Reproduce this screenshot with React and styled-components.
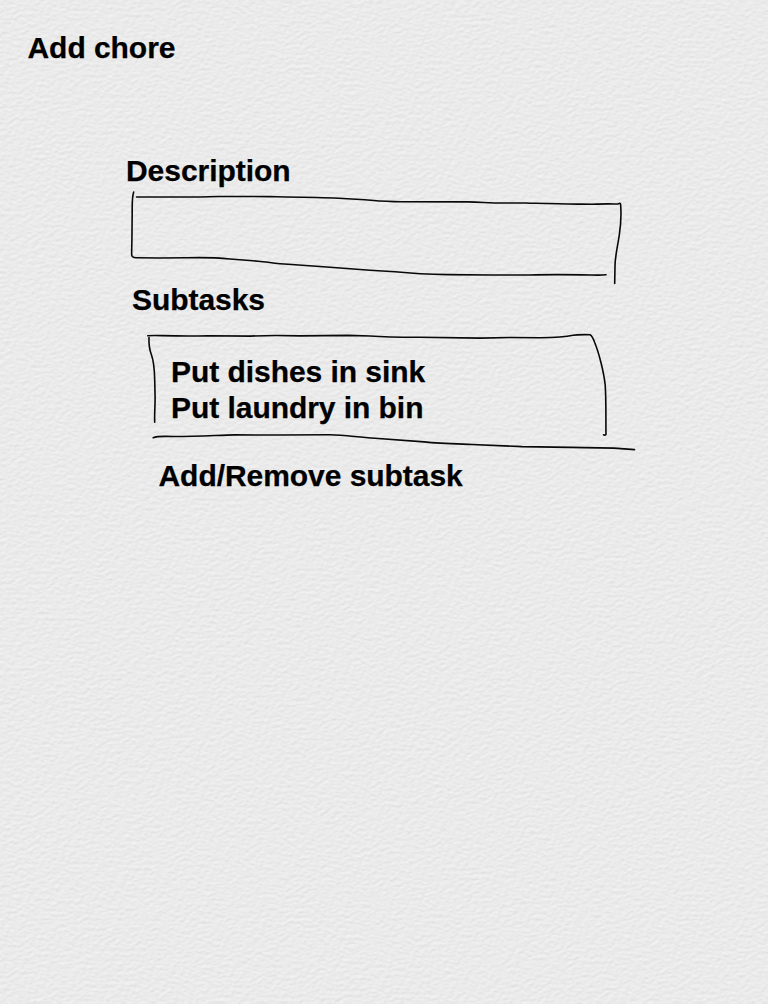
import React from "react";
import styled, { createGlobalStyle, css } from "styled-components";

const GlobalStyle = createGlobalStyle`
  body {
    margin: 0;
    background: #eaeaea;
  }
`;

const heavyText = css`
  font-size: 30px;
  line-height: 36px;
  font-weight: 700;
  letter-spacing: -0.05px;
  white-space: nowrap;
`;

const Page = styled.main`
  position: relative;
  isolation: isolate;
  box-sizing: border-box;
  width: 768px;
  height: 1004px;
  padding-top: 30px;
  overflow: hidden;
  display: flex;
  flex-direction: column;
  background: #eaeaea;
  color: #000;
  font-family: "Liberation Sans", Helvetica, Arial, sans-serif;
  -webkit-text-stroke: 0.25px #000;
`;

const Paper = styled.svg`
  position: absolute;
  inset: 0;
  z-index: -1;
  width: 100%;
  height: 100%;
`;

const Title = styled.h1`
  ${heavyText}
  margin: 0 0 87px 27.5px;
`;

const Form = styled.section`
  display: flex;
  flex-direction: column;
  align-items: flex-start;
`;

const Label = styled.h2`
  ${heavyText}
  margin: 0 0 0 ${(p) => p.$indent}px;
`;

const Field = styled.div`
  display: grid;
  width: 768px;
  height: ${(p) => p.$height}px;
  > * {
    grid-area: 1 / 1;
  }
`;

const Sketch = styled.svg`
  width: 768px;
  height: 100%;
  overflow: visible;
  fill: none;
  stroke: #080808;
  stroke-width: 1.6;
  stroke-linecap: round;
  stroke-linejoin: round;
`;

const TaskList = styled.ul`
  margin: 0;
  padding: 36px 0 0 171px;
  list-style: none;
`;

const Task = styled.li`
  ${heavyText}
`;

function PaperTexture() {
  return (
    <Paper aria-hidden="true">
      <filter id="grain" x="0" y="0" width="100%" height="100%" colorInterpolationFilters="sRGB">
        <feTurbulence type="fractalNoise" baseFrequency="0.2 0.3" numOctaves="3" seed="8" result="noise" />
        <feDiffuseLighting in="noise" surfaceScale="0.24" diffuseConstant="1.062" lightingColor="#ebebeb">
          <feDistantLight azimuth="250" elevation="70" />
        </feDiffuseLighting>
      </filter>
      <rect width="100%" height="100%" filter="url(#grain)" />
    </Paper>
  );
}

export default function App() {
  return (
    <>
      <GlobalStyle />
      <Page>
        <PaperTexture />
        <Title>Add chore</Title>
        <Form>
          <Label $indent={126}>Description</Label>
          <Field $height={93}>
            <Sketch viewBox="0 189 768 93">
              <path d="M133.7 192 C132 197 132.1 203 132.2 212 L132 232 C132 243 131.5 251 131.7 255 Q132 257.7 136 257.7 L160 258 L186 257.8 C205 257.3 215 257.5 230 259 L258 261.2 C268 262 276 263.8 288 264.3 L320 266.5 L370 270.2 L395 271.7 C415 273.8 426 274.3 448 274.6 L490 275 L530 275 C550 274.3 568 274.5 591 275 Q602 275.4 606 274.7" />
              <path d="M136.5 197 L200 197 L218 196.5 L270 196.6 C296 197 312 197.2 334 198 L365 199.7 C380 201 386 201.8 402 201.7 L468 201.9 C483 202.2 489 203 504 203 L526 203 C545 203.6 557 204.2 581 204.1 L592 204.3 C603 203.8 609 203.6 614 204 Q618 204.3 619.5 203.3 Q620.8 203 620.7 206 C621.4 216 621 224 619.3 235 C617.5 247 615.1 256 615 266 L614.7 283.5" />
            </Sketch>
          </Field>
          <Label $indent={132}>Subtasks</Label>
          <Field $height={140}>
            <Sketch viewBox="0 318 768 140">
              <path d="M149 337.5 C148.6 345 150 351 151.5 355 C154 362 154.5 369 154.7 380 L155.1 397 C155.1 409 154.3 414 154.7 422.3" />
              <path d="M147.8 335.8 Q152 335.2 162 335.6 C180 336.2 191 336.4 207 335.7 L250 336.1 C269 335.2 280 335.3 300 335.9 L348 335.4 L370 336 C388 337.2 399 337.2 420 337.3 L480 338.1 L510 337.5 L540 337.8 C559 337.5 566 336.8 573 335.3 C577 334.6 582 334.5 590 334.7 Q592.4 336 594.5 342 C599 353 603.8 372 605.2 385 C606.3 400 605.7 421 606 434.5 Q605 435.6 603.5 434.8" />
              <path d="M153.2 437.7 Q157 436.3 165 436.4 C190 437 216 435.3 235 434.9 L280 435 L330 434.8 C345 435 356 437 375 438.2 L424 441.9 C440 443.5 454 443.8 472 444.5 L522 446.6 L570 447.4 L614 448.1 L634.5 449.6" />
            </Sketch>
            <TaskList>
              <Task>Put dishes in sink</Task>
              <Task>Put laundry in bin</Task>
            </TaskList>
          </Field>
          <Label as="p" $indent={158.5}>Add/Remove subtask</Label>
        </Form>
      </Page>
    </>
  );
}
